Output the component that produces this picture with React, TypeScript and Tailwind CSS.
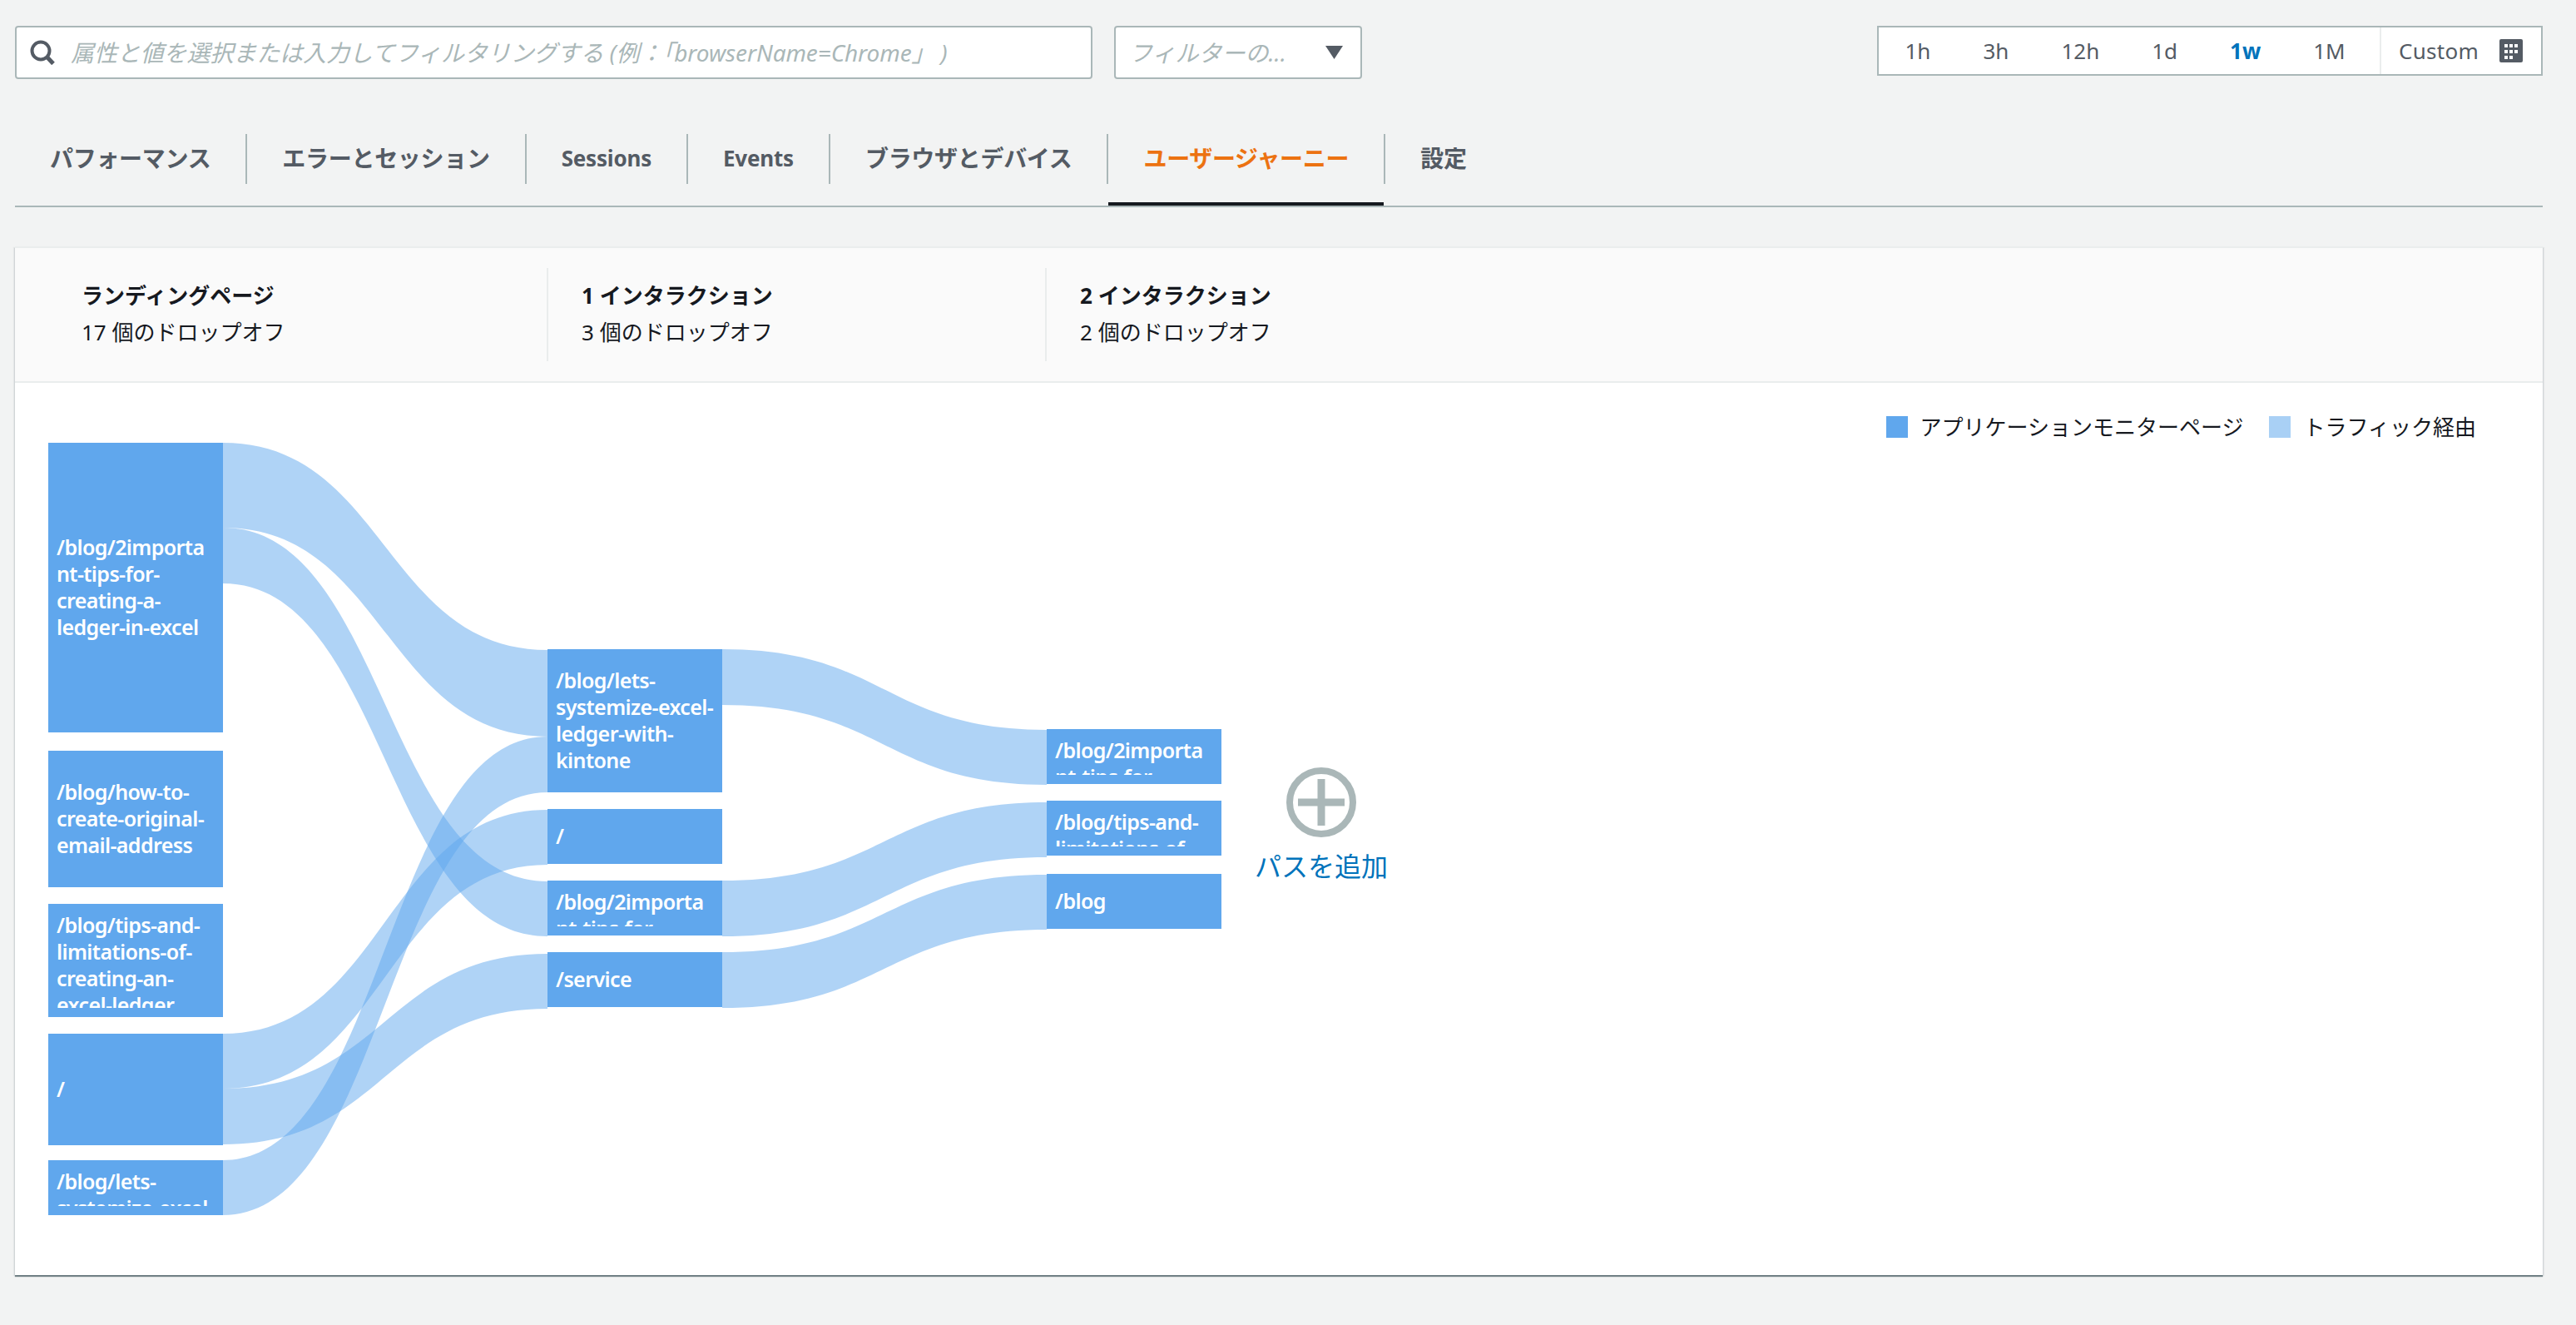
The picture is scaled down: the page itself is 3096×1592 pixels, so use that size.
import { Fragment } from 'react';

const COLUMN_X = [40, 640, 1240];
const NODE_WIDTH = 210;

const LEDGER_PATH = '/blog/2importa\nnt-tips-for-\ncreating-a-\nledger-in-excel';
const TIPS_PATH = '/blog/tips-and-\nlimitations-of-\ncreating-an-\nexcel-ledger';
const KINTONE_PATH = '/blog/lets-\nsystemize-excel-\nledger-with-\nkintone';

// y positions are relative to the top of the chart area
const nodes = [
  { col: 0, top: 72, bottom: 420, label: LEDGER_PATH },
  { col: 0, top: 442, bottom: 606, label: '/blog/how-to-\ncreate-original-\nemail-address' },
  { col: 0, top: 626, bottom: 762, label: TIPS_PATH },
  { col: 0, top: 782, bottom: 916, label: '/' },
  { col: 0, top: 934, bottom: 1000, label: KINTONE_PATH },
  { col: 1, top: 320, bottom: 492, label: KINTONE_PATH },
  { col: 1, top: 512, bottom: 578, label: '/' },
  { col: 1, top: 598, bottom: 664, label: LEDGER_PATH },
  { col: 1, top: 684, bottom: 750, label: '/service' },
  { col: 2, top: 416, bottom: 482, label: LEDGER_PATH },
  { col: 2, top: 502, bottom: 568, label: TIPS_PATH },
  { col: 2, top: 590, bottom: 656, label: '/blog' },
];

const links = [
  { from: 0, a0: 72, a1: 174, b0: 321, b1: 425 },
  { from: 0, a0: 174, a1: 241, b0: 599, b1: 665 },
  { from: 0, a0: 934, a1: 1000, b0: 425, b1: 492 },
  { from: 0, a0: 782, a1: 848, b0: 513, b1: 579 },
  { from: 0, a0: 848, a1: 915, b0: 686, b1: 752 },
  { from: 1, a0: 320, a1: 387, b0: 417, b1: 483 },
  { from: 1, a0: 598, a1: 665, b0: 504, b1: 570 },
  { from: 1, a0: 684, a1: 751, b0: 591, b1: 657 },
];

function linkPath(from: number, a0: number, a1: number, b0: number, b1: number) {
  const x0 = COLUMN_X[from] + NODE_WIDTH;
  const x1 = COLUMN_X[from + 1];
  const mx = (x0 + x1) / 2;
  return `M${x0} ${a0}C${mx} ${a0} ${mx} ${b0} ${x1} ${b0}L${x1} ${b1}C${mx} ${b1} ${mx} ${a1} ${x0} ${a1}Z`;
}

const tabs = ['パフォーマンス', 'エラーとセッション', 'Sessions', 'Events', 'ブラウザとデバイス', 'ユーザージャーニー', '設定'];
const ranges = ['1h', '3h', '12h', '1d', '1w', '1M'];
const steps = [
  { title: 'ランディングページ', sub: '17 個のドロップオフ' },
  { title: '1 インタラクション', sub: '3 個のドロップオフ' },
  { title: '2 インタラクション', sub: '2 個のドロップオフ' },
];

function SearchIcon() {
  return (
    <svg width="30" height="30" viewBox="0 0 30 30" fill="none" stroke="#545b64" className="shrink-0">
      <circle cx="13" cy="13" r="10.5" strokeWidth="4" />
      <path d="M20 20l8 8.5" strokeWidth="5" />
    </svg>
  );
}

function CalendarIcon() {
  return (
    <svg width="28" height="28" viewBox="0 0 28 28" className="shrink-0">
      <rect width="28" height="28" rx="2" fill="#545b64" />
      <g fill="#fff">
        <rect x="6" y="6" width="4" height="4" />
        <rect x="12" y="6" width="4" height="4" />
        <rect x="18" y="6" width="4" height="4" />
        <rect x="6" y="13" width="4" height="4" />
        <rect x="12" y="13" width="4" height="4" />
        <rect x="18" y="13" width="4" height="4" />
        <rect x="6" y="20" width="4" height="4" />
        <rect x="12" y="20" width="4" height="4" />
      </g>
    </svg>
  );
}

function App() {
  return (
    <div className="min-h-screen w-[3096px] bg-[#f2f3f3] pl-[18px] pr-[40px] pt-[31px] font-['Noto_Sans','Noto_Sans_CJK_JP',sans-serif] text-[28px] text-[#16191f]">
      {/* Filter bar */}
      <div className="flex items-start">
        <div className="flex h-[64px] w-[1295px] items-center gap-[19px] rounded-[4px] border-2 border-[#aab7b8] bg-white pl-[16px]">
          <SearchIcon />
          <div className="truncate italic tracking-[-0.1px] text-[#aab7b8]">
            属性と値を選択または入力してフィルタリングする (例：「browserName=Chrome」 )
          </div>
        </div>
        <div className="ml-[26px] flex h-[64px] w-[298px] items-center justify-between rounded-[4px] border-2 border-[#aab7b8] bg-white pl-[16px] pr-[21px]">
          <span className="italic text-[#aab7b8]">フィルターの...</span>
          <svg width="21" height="16" viewBox="0 0 21 16">
            <path d="M0 0h21L10.5 16z" fill="#545b64" />
          </svg>
        </div>
        <div className="ml-auto flex h-[60px] w-[800px] items-stretch border-2 border-[#aab7b8] bg-white text-[26px] text-[#545b64]">
          <div className="flex flex-1 items-center">
            {ranges.map((range) => (
              <span key={range} className={range === '1w' ? 'px-[31.5px] font-bold text-[#0073bb]' : 'px-[31.5px]'}>
                {range}
              </span>
            ))}
          </div>
          <div className="flex w-[194px] items-center gap-[25px] border-l-2 border-[#eaeded] pl-[21px]">
            <span className="tracking-[0.3px]">Custom</span>
            <CalendarIcon />
          </div>
        </div>
      </div>

      {/* Tabs */}
      <div className="mt-[66px] flex h-[88px] border-b-2 border-[#aab7b8] font-bold leading-[42px] text-[#545b64]">
        {tabs.map((tab, i) => (
          <Fragment key={tab}>
            {i > 0 && <div className="h-[60px] w-[2px] bg-[#aab7b8]" />}
            <div
              className={
                i === 5
                  ? 'flex h-[86px] items-start border-b-4 border-[#16191f] px-[42px] pt-[8px] tracking-[-0.3px] text-[#ec7211]'
                  : i === 2 || i === 3
                    ? 'flex h-[86px] items-start px-[42px] pt-[8px] text-[26px] tracking-[-0.2px]'
                    : 'flex h-[86px] items-start px-[42px] pt-[8px] tracking-[-0.3px]'
              }
            >
              {tab}
            </div>
          </Fragment>
        ))}
      </div>

      {/* Journey panel */}
      <div className="mt-[47px] h-[1236px] bg-white shadow-[0_2px_1px_0_rgba(0,28,36,0.5),2px_1px_1px_0_rgba(0,28,36,0.05),-2px_1px_1px_0_rgba(0,28,36,0.05)]">
        <div className="flex h-[164px] items-center border-b-2 border-t-2 border-b-[#eaeded] border-t-[#eaeded] bg-[#fafafa] pl-[40px] text-[26px] leading-[44px]">
          {steps.map((step, i) => (
            <div key={step.title} className={i === 0 ? 'h-[112px] w-[599px] px-[40px] pt-[11px]' : 'h-[112px] w-[599px] border-l-2 border-[#eaeded] px-[40px] pt-[11px]'}>
              <div className="font-bold">{step.title}</div>
              <div>{step.sub}</div>
            </div>
          ))}
        </div>

        <div className="relative h-[1072px]">
          {/* Legend */}
          <div className="flex justify-end gap-[30px] pr-[80px] pt-[31px] text-[26px] leading-[44px]">
            <div className="flex items-center gap-[15px]">
              <span className="h-[26px] w-[26px] bg-[#60a7ed]" />
              アプリケーションモニターページ
            </div>
            <div className="flex items-center gap-[16px]">
              <span className="h-[26px] w-[26px] bg-[#a9d0f5]" />
              トラフィック経由
            </div>
          </div>

          {/* Sankey links */}
          <svg className="absolute left-0 top-0" width="1500" height="1072">
            {links.map((link) => (
              <path
                key={`${link.from}-${link.a0}`}
                d={linkPath(link.from, link.a0, link.a1, link.b0, link.b1)}
                fill="#60a7ed"
                fillOpacity="0.5"
              />
            ))}
          </svg>

          {/* Sankey nodes */}
          {nodes.map((node) => (
            <div
              key={`${node.col}-${node.top}`}
              className="absolute bg-[#60a7ed] px-[10px] pb-[11px] pt-[9px] text-[25px] font-semibold leading-[32px] tracking-[-0.6px] text-white"
              style={{ left: COLUMN_X[node.col], top: node.top, width: NODE_WIDTH, height: node.bottom - node.top }}
            >
              <div className="flex h-full overflow-hidden">
                <div className="my-auto whitespace-pre">{node.label}</div>
              </div>
            </div>
          ))}

          {/* Add path */}
          <div className="absolute left-[1490px] top-[462px] flex w-[160px] flex-col items-center text-[32px] leading-[40px] text-[#0073bb]">
            <svg width="84" height="84" viewBox="0 0 84 84" fill="none" stroke="#aab7b8">
              <circle cx="42" cy="42" r="38" strokeWidth="8" />
              <path d="M42 14v56M14 42h56" strokeWidth="9" />
            </svg>
            <span className="mt-[15px] whitespace-nowrap">パスを追加</span>
          </div>
        </div>
      </div>
    </div>
  );
}

export default App;
